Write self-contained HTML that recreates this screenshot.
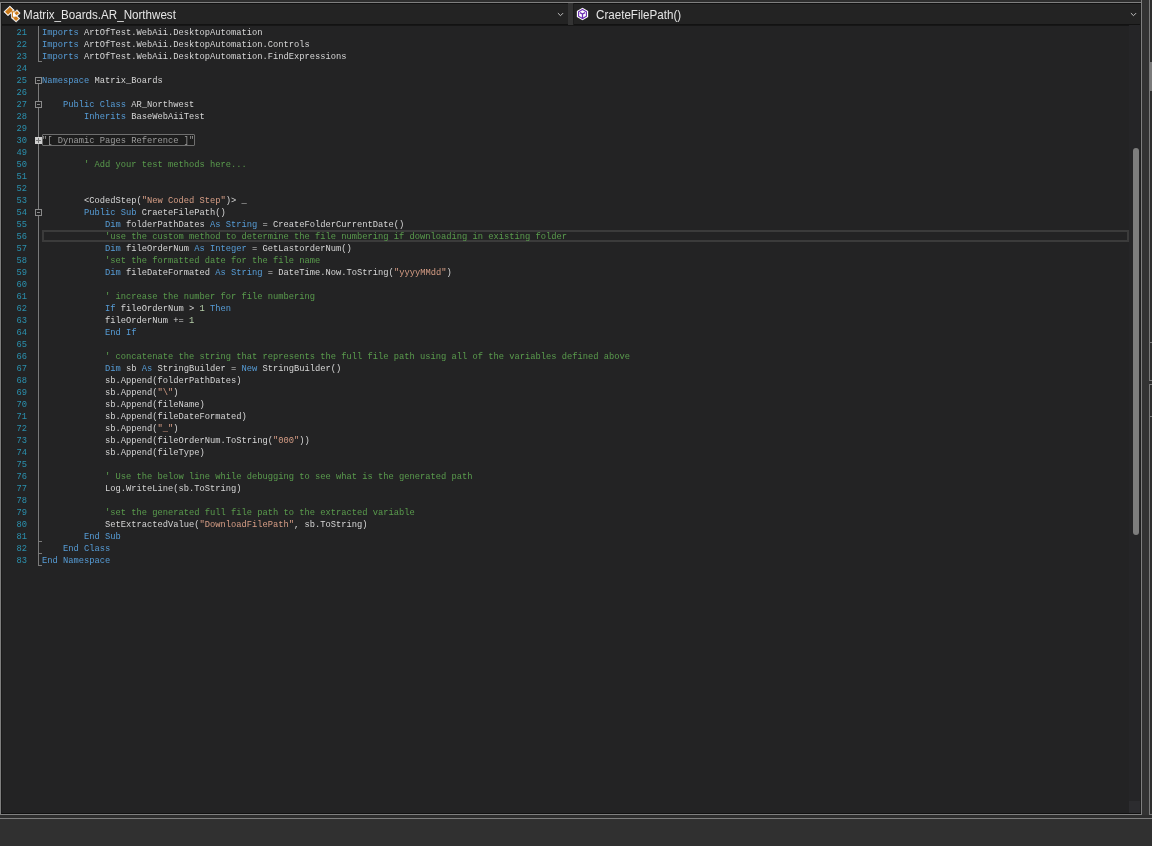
<!DOCTYPE html>
<html><head><meta charset="utf-8">
<style>
html,body{margin:0;padding:0;}
body{width:1152px;height:846px;position:relative;overflow:hidden;background:#303030;}
.abs{position:absolute;}
#topstrip{left:0;top:0;width:1152px;height:2px;background:#2e2e2e;}
#frame{left:0;top:2px;width:1140px;height:811px;border:1px solid #7f7f7f;background:#111;}
#frx{left:1141px;top:0;width:1px;height:3px;background:#7f7f7f;}
#ldark{left:1px;top:4px;width:1px;height:809px;background:#1a1a1a;}
#rdark{left:1140px;top:4px;width:1px;height:809px;background:#1e1e1e;}
#hdr{left:2px;top:4px;width:1138px;height:20px;background:#232323;}
#hdrline{left:2px;top:24px;width:1138px;height:1px;background:#121212;}
#hdrline2{left:2px;top:25px;width:1138px;height:1px;background:#161616;}
#code{left:2px;top:26px;width:1138px;height:787px;background:#232324;}
#sep{left:568px;top:3px;width:5px;height:22px;background:#333333;}
#sepd{left:573px;top:3px;width:1px;height:22px;background:#1c1c1c;}
#rstrip{left:1142px;top:0;width:10px;height:815px;background:#333333;}
#rline{left:1149px;top:0;width:1px;height:381px;background:#7a7a7a;}
#rline2{left:1149px;top:384px;width:1px;height:431px;background:#7a7a7a;}
#rfill{left:1150px;top:0;width:2px;height:815px;background:#2e2e2e;}
#rthumb{left:1150px;top:62px;width:2px;height:29px;background:#7a7a7a;}
#rt1{left:1149px;top:342px;width:3px;height:1px;background:#7a7a7a;}
#rt2{left:1149px;top:380px;width:3px;height:1px;background:#7a7a7a;}
#rt3{left:1149px;top:384px;width:3px;height:1px;background:#7a7a7a;}
#rt4{left:1149px;top:416px;width:3px;height:1px;background:#7a7a7a;}
#rt5{left:1149px;top:814px;width:3px;height:1px;background:#7a7a7a;}
#band{left:0;top:815px;width:1152px;height:3px;background:#2e2e2e;}
#bline{left:0;top:818px;width:1152px;height:1px;background:#7f7f7f;}
#status{left:0;top:819px;width:1152px;height:27px;background:#303030;}
.ttl{font-family:"Liberation Sans",sans-serif;font-size:12.3px;color:#e6e6e6;line-height:20px;top:4.6px;white-space:pre;transform:scaleX(0.944);transform-origin:0 0;}
.chev{width:6px;height:4px;}
#track{left:1129px;top:25px;width:11px;height:788px;background:#252527;}
#thumb{left:1133px;top:148px;width:6px;height:387px;background:#7d7d7d;border-radius:3px;}
#corner{left:1129px;top:801px;width:11px;height:12px;background:#2c2c2f;}
.l,.n0{position:absolute;font-family:"Liberation Mono",monospace;font-size:8.75px;line-height:12px;white-space:pre;color:#d6d6d6;}
.l{left:42px;}
.n0{left:0;width:27px;text-align:right;color:#2b91af;}
.k{color:#569cd6;}
.c{color:#5a9c4d;}
.s{color:#d69d85;}
.n{color:#b5cea8;}
.r{color:#9b9b9b;}
#regbox{left:42px;top:134px;width:151px;height:10px;border:1px solid #6e6e6e;border-radius:1px;background:#1d1d1d;}
#curline{left:42px;top:230px;width:1083px;height:8px;border:2px solid #3b3b3b;}
.gl{background:#7a7a7a;}
.box{width:5px;height:5px;border:1px solid #8a8a8a;background:#232324;}
.box i{position:absolute;left:1px;top:2px;width:3px;height:1px;background:#8a8a8a;}
</style></head><body><div id="wrap" style="position:absolute;left:0;top:0;width:1152px;height:846px;will-change:transform">
<div class="abs" id="topstrip"></div>
<div class="abs" id="rstrip"></div>
<div class="abs" id="rfill"></div><div class="abs" id="rline"></div><div class="abs" id="rline2"></div><div class="abs" id="rthumb"></div><div class="abs" id="rt1"></div><div class="abs" id="rt2"></div><div class="abs" id="rt3"></div><div class="abs" id="rt4"></div><div class="abs" id="rt5"></div>
<div class="abs" id="frame"></div><div class="abs" id="frx"></div>
<div class="abs" id="hdr"></div>
<div class="abs" id="hdrline"></div><div class="abs" id="hdrline2"></div>
<div class="abs" id="code"></div>
<div class="abs" id="track"></div>
<div class="abs" id="thumb"></div>
<div class="abs" id="corner"></div><div class="abs" id="rdark"></div><div class="abs" id="ldark"></div>
<div class="abs" id="sep"></div>
<div class="abs" id="sepd"></div>
<div class="abs" id="band"></div>
<div class="abs" id="bline"></div>
<div class="abs" id="status"></div>

<!-- header icons -->
<svg class="abs" style="left:0;top:0" width="24" height="24" viewBox="0 0 24 24">
<g fill="#fff" stroke="#fff" stroke-width="0.6" stroke-linejoin="round">
<path d="M3.8 11.8 L9.9 6 L14.2 10.1 L8 15.8 Z"/>
<path d="M13.6 13.2 L17 9.7 L20.2 13.2 L16.9 16.3 Z"/>
<path d="M12.1 18.6 L16 15 L19.9 18.5 L16.1 22.1 Z"/>
<path d="M11 11 H15.4 V18.3 H11.6 Z"/>
</g>
<g fill="#ca7a1a">
<path d="M5 11.8 L9.9 7.1 L12.9 10.1 L8 14.8 Z"/>
<path d="M14.6 13.2 L16.9 10.9 L19.1 13.2 L16.5 15.3 Z"/>
<path d="M13.4 18.6 L16 16.2 L18.7 18.5 L16.1 20.9 Z"/>
</g>
<path d="M10.5 11.8 H15.4 M12.45 11.8 V17.25 H15.4" stroke="#ca7a1a" stroke-width="1" fill="none"/>
</svg>
<div class="abs ttl" style="left:23px">Matrix_Boards.AR_Northwest</div>
<svg class="abs" style="left:557px;top:12px" width="7" height="5" viewBox="0 0 7 5"><path d="M0.9 1.1 L3.5 3.7 L6.1 1.1" stroke="#c0c0c0" stroke-width="1" fill="none"/></svg>

<svg class="abs" style="left:576px;top:7px" width="13" height="14" viewBox="0 0 13 14">
<path d="M6.5 0.85 L12.15 4 L12.15 10 L6.5 13.15 L0.85 10 L0.85 4 Z" fill="#fff"/>
<path d="M6.5 2.5 L10.4 4.8 L10.4 9.2 L6.5 11.5 L2.6 9.2 L2.6 4.8 Z" fill="none" stroke="#6a2db2" stroke-width="1.1"/>
<path d="M3.9 5.6 L6.5 7.1 L9.1 5.6 M6.5 7.1 V11.2" fill="none" stroke="#6a2db2" stroke-width="1.3"/>
</svg>
<div class="abs ttl" style="left:596px">CraeteFilePath()</div>
<svg class="abs" style="left:1130px;top:12px" width="7" height="5" viewBox="0 0 7 5"><path d="M0.9 1.1 L3.5 3.7 L6.1 1.1" stroke="#c0c0c0" stroke-width="1" fill="none"/></svg>

<!-- outline margin -->
<div class="abs gl" style="left:38px;top:26px;width:1px;height:36px"></div>
<div class="abs gl" style="left:38px;top:61px;width:4px;height:1px"></div>
<div class="abs gl" style="left:38px;top:84px;width:1px;height:482px"></div>
<div class="abs gl" style="left:38px;top:541px;width:4px;height:1px"></div>
<div class="abs gl" style="left:38px;top:553px;width:4px;height:1px"></div>
<div class="abs gl" style="left:38px;top:565px;width:4px;height:1px"></div>
<div class="abs box" style="left:35px;top:77px"><i></i></div>
<div class="abs box" style="left:35px;top:101px"><i></i></div>
<div class="abs box" style="left:35px;top:209px"><i></i></div>
<div class="abs" style="left:35px;top:137px;width:7px;height:7px;background:#d0d0d0;"></div>
<div class="abs" style="left:36px;top:140px;width:5px;height:1px;background:#7a7a7a"></div>
<div class="abs" style="left:38px;top:138px;width:1px;height:5px;background:#7a7a7a"></div>

<div class="abs" id="regbox"></div>
<div class="abs" id="curline"></div>

<div class="n0" style="top:27px">21</div>
<div class="n0" style="top:39px">22</div>
<div class="n0" style="top:51px">23</div>
<div class="n0" style="top:63px">24</div>
<div class="n0" style="top:75px">25</div>
<div class="n0" style="top:87px">26</div>
<div class="n0" style="top:99px">27</div>
<div class="n0" style="top:111px">28</div>
<div class="n0" style="top:123px">29</div>
<div class="n0" style="top:135px">30</div>
<div class="n0" style="top:147px">49</div>
<div class="n0" style="top:159px">50</div>
<div class="n0" style="top:171px">51</div>
<div class="n0" style="top:183px">52</div>
<div class="n0" style="top:195px">53</div>
<div class="n0" style="top:207px">54</div>
<div class="n0" style="top:219px">55</div>
<div class="n0" style="top:231px">56</div>
<div class="n0" style="top:243px">57</div>
<div class="n0" style="top:255px">58</div>
<div class="n0" style="top:267px">59</div>
<div class="n0" style="top:279px">60</div>
<div class="n0" style="top:291px">61</div>
<div class="n0" style="top:303px">62</div>
<div class="n0" style="top:315px">63</div>
<div class="n0" style="top:327px">64</div>
<div class="n0" style="top:339px">65</div>
<div class="n0" style="top:351px">66</div>
<div class="n0" style="top:363px">67</div>
<div class="n0" style="top:375px">68</div>
<div class="n0" style="top:387px">69</div>
<div class="n0" style="top:399px">70</div>
<div class="n0" style="top:411px">71</div>
<div class="n0" style="top:423px">72</div>
<div class="n0" style="top:435px">73</div>
<div class="n0" style="top:447px">74</div>
<div class="n0" style="top:459px">75</div>
<div class="n0" style="top:471px">76</div>
<div class="n0" style="top:483px">77</div>
<div class="n0" style="top:495px">78</div>
<div class="n0" style="top:507px">79</div>
<div class="n0" style="top:519px">80</div>
<div class="n0" style="top:531px">81</div>
<div class="n0" style="top:543px">82</div>
<div class="n0" style="top:555px">83</div>
<div class="l" style="top:27px"><span class="k">Imports</span> ArtOfTest.WebAii.DesktopAutomation</div>
<div class="l" style="top:39px"><span class="k">Imports</span> ArtOfTest.WebAii.DesktopAutomation.Controls</div>
<div class="l" style="top:51px"><span class="k">Imports</span> ArtOfTest.WebAii.DesktopAutomation.FindExpressions</div>
<div class="l" style="top:63px"></div>
<div class="l" style="top:75px"><span class="k">Namespace</span> Matrix_Boards</div>
<div class="l" style="top:87px"></div>
<div class="l" style="top:99px">    <span class="k">Public</span> <span class="k">Class</span> AR_Northwest</div>
<div class="l" style="top:111px">        <span class="k">Inherits</span> BaseWebAiiTest</div>
<div class="l" style="top:123px"></div>
<div class="l" style="top:135px"><span class="r">&quot;[ Dynamic Pages Reference ]&quot;</span></div>
<div class="l" style="top:147px"></div>
<div class="l" style="top:159px">        <span class="c">&#x27; Add your test methods here...</span></div>
<div class="l" style="top:171px"></div>
<div class="l" style="top:183px"></div>
<div class="l" style="top:195px">        &lt;CodedStep(<span class="s">&quot;New Coded Step&quot;</span>)&gt; _</div>
<div class="l" style="top:207px">        <span class="k">Public</span> <span class="k">Sub</span> CraeteFilePath()</div>
<div class="l" style="top:219px">            <span class="k">Dim</span> folderPathDates <span class="k">As</span> <span class="k">String</span> = CreateFolderCurrentDate()</div>
<div class="l" style="top:231px">            <span class="c">&#x27;use the custom method to determine the file numbering if downloading in existing folder</span></div>
<div class="l" style="top:243px">            <span class="k">Dim</span> fileOrderNum <span class="k">As</span> <span class="k">Integer</span> = GetLastorderNum()</div>
<div class="l" style="top:255px">            <span class="c">&#x27;set the formatted date for the file name</span></div>
<div class="l" style="top:267px">            <span class="k">Dim</span> fileDateFormated <span class="k">As</span> <span class="k">String</span> = DateTime.Now.ToString(<span class="s">&quot;yyyyMMdd&quot;</span>)</div>
<div class="l" style="top:279px"></div>
<div class="l" style="top:291px">            <span class="c">&#x27; increase the number for file numbering</span></div>
<div class="l" style="top:303px">            <span class="k">If</span> fileOrderNum &gt; <span class="n">1</span> <span class="k">Then</span></div>
<div class="l" style="top:315px">            fileOrderNum += <span class="n">1</span></div>
<div class="l" style="top:327px">            <span class="k">End</span> <span class="k">If</span></div>
<div class="l" style="top:339px"></div>
<div class="l" style="top:351px">            <span class="c">&#x27; concatenate the string that represents the full file path using all of the variables defined above</span></div>
<div class="l" style="top:363px">            <span class="k">Dim</span> sb <span class="k">As</span> StringBuilder = <span class="k">New</span> StringBuilder()</div>
<div class="l" style="top:375px">            sb.Append(folderPathDates)</div>
<div class="l" style="top:387px">            sb.Append(<span class="s">&quot;\&quot;</span>)</div>
<div class="l" style="top:399px">            sb.Append(fileName)</div>
<div class="l" style="top:411px">            sb.Append(fileDateFormated)</div>
<div class="l" style="top:423px">            sb.Append(<span class="s">&quot;_&quot;</span>)</div>
<div class="l" style="top:435px">            sb.Append(fileOrderNum.ToString(<span class="s">&quot;000&quot;</span>))</div>
<div class="l" style="top:447px">            sb.Append(fileType)</div>
<div class="l" style="top:459px"></div>
<div class="l" style="top:471px">            <span class="c">&#x27; Use the below line while debugging to see what is the generated path</span></div>
<div class="l" style="top:483px">            Log.WriteLine(sb.ToString)</div>
<div class="l" style="top:495px"></div>
<div class="l" style="top:507px">            <span class="c">&#x27;set the generated full file path to the extracted variable</span></div>
<div class="l" style="top:519px">            SetExtractedValue(<span class="s">&quot;DownloadFilePath&quot;</span>, sb.ToString)</div>
<div class="l" style="top:531px">        <span class="k">End</span> <span class="k">Sub</span></div>
<div class="l" style="top:543px">    <span class="k">End</span> <span class="k">Class</span></div>
<div class="l" style="top:555px"><span class="k">End</span> <span class="k">Namespace</span></div>
</div></body></html>
